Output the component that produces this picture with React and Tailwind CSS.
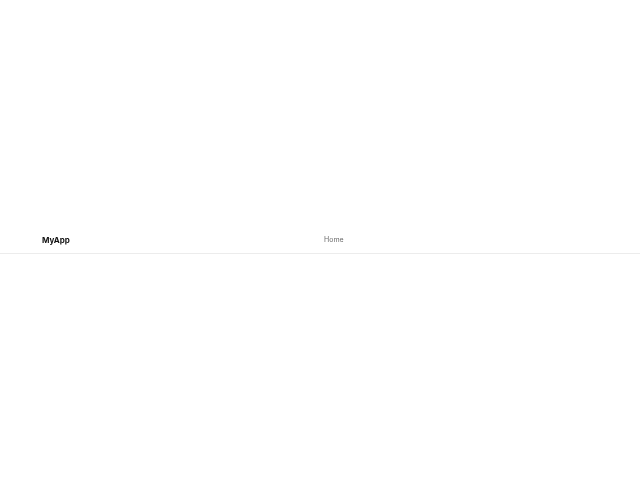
export default function App() {
  return (
    <div className="h-screen w-full bg-white flex flex-col justify-center" style={{ fontFamily: 'Inter, "Liberation Sans", Arial, sans-serif' }}>
      <header className="h-[28px] w-full border-b border-[#ececec] flex items-center px-[42px] pt-px will-change-transform">
        <div className="w-[282px] text-[8px] font-bold text-[#111111]">MyApp</div>
        <nav className="flex items-center gap-4">
          <span className="text-[7px] text-[#6b6b6b]">Home</span>
        </nav>
      </header>
    </div>
  );
}
